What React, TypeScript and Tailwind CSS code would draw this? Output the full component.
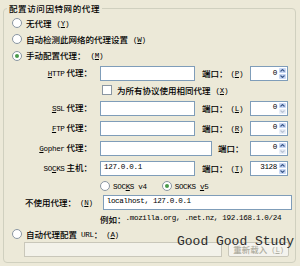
import React from 'react';

const L = ({ children }: { children: React.ReactNode }) => (
  <span className="font-['Liberation_Mono',monospace] font-normal text-[7.6px] tracking-[-0.35px]">{children}</span>
);

const K = ({ c }: { c: string }) => (
  <L>
    (<u>{c}</u>)
  </L>
);

function Radio({ checked }: { checked?: boolean }) {
  return (
    <span className="w-[10px] h-[10px] shrink-0 rounded-full border border-[#8a96a2] bg-white flex items-center justify-center">
      {checked && <span className="w-[4px] h-[4px] rounded-full bg-[#4a9a4a]" />}
    </span>
  );
}

function Arrow({ up, off }: { up?: boolean; off?: boolean }) {
  return (
    <svg width="5" height="3" viewBox="0 0 5 3">
      <path
        d={up ? 'M0.5 2.5 L2.5 0.5 L4.5 2.5' : 'M0.5 0.5 L2.5 2.5 L4.5 0.5'}
        fill="none"
        stroke={off ? '#b9c3d3' : '#3d5a8a'}
        strokeWidth="1.1"
      />
    </svg>
  );
}

function Spin({ value, downOff }: { value: string; downOff?: boolean }) {
  return (
    <div className="w-[38px] h-[15px] shrink-0 border border-[#7f9db9] bg-white flex">
      <span className="flex-1 flex items-center justify-end pr-[2px]">
        <L>{value}</L>
      </span>
      <div className="w-[8px] flex flex-col gap-[1px] py-[1px] pr-[1px]">
        <span className="flex-1 rounded-[1px] bg-[#c9d8f5] flex items-center justify-center">
          <Arrow up />
        </span>
        <span className={`flex-1 rounded-[1px] flex items-center justify-center ${downOff ? 'bg-[#e8eef8]' : 'bg-[#c9d8f5]'}`}>
          <Arrow off={downOff} />
        </span>
      </div>
    </div>
  );
}

function ProxyRow({
  label,
  value = '',
  port,
  portKey,
  wide,
  downOff,
  rowClass,
}: {
  label: React.ReactNode;
  value?: string;
  port: string;
  portKey?: string;
  wide?: boolean;
  downOff?: boolean;
  rowClass: string;
}) {
  return (
    <div className={`flex items-center ${rowClass}`}>
      <div className="w-[88px] text-right whitespace-nowrap">{label}</div>
      <div
        className={`ml-[8px] h-[15px] border border-[#7f9db9] bg-white flex items-center pl-[3px] ${
          wide ? 'w-[112px]' : 'w-[95px]'
        }`}
      >
        <L>{value}</L>
      </div>
      <div className={`flex items-center whitespace-nowrap ${wide ? 'ml-[6px] w-[32px]' : 'ml-[7px] w-[48px]'}`}>
        <span>端口：</span>
        {portKey && (
          <span className="ml-[3px]">
            <K c={portKey} />
          </span>
        )}
      </div>
      <Spin value={port} downOff={downOff} />
    </div>
  );
}

export default function App() {
  return (
    <div className="w-[300px] h-[266px] bg-[#ece9d8] pt-[2px] pl-[3px] relative overflow-hidden font-['Noto_Sans_CJK_SC',sans-serif] font-medium text-[8.5px] leading-none text-black">
      <fieldset className="w-[293px] h-[261px] border border-[#d0d0bf] rounded-[4px]">
        <legend className="ml-[3px] px-[2px] leading-[12px] tracking-[0.6px]">配置访问因特网的代理</legend>

        <div className="flex items-center h-[20px] pl-[8px] -mt-[1px]">
          <Radio />
          <span className="ml-[4px]">无代理</span>
          <span className="ml-[5px]">
            <K c="Y" />
          </span>
        </div>
        <div className="flex items-center h-[12px] pl-[8px]">
          <Radio />
          <span className="ml-[4px]">自动检测此网络的代理设置</span>
          <span className="ml-[5px]">
            <K c="W" />
          </span>
        </div>
        <div className="flex items-center h-[21px] pl-[8px]">
          <Radio checked />
          <span className="ml-[4px]">手动配置代理：</span>
          <span className="ml-[5px]">
            <K c="M" />
          </span>
        </div>

        <ProxyRow
          rowClass="h-[15px]"
          label={
            <>
              <L>
                <u>H</u>TTP
              </L>{' '}
              代理：
            </>
          }
          port="0"
          portKey="P"
        />

        <div className="flex items-center h-[18px] pl-[98px]">
          <span className="w-[10px] h-[10px] border border-[#8a96a2] bg-white shrink-0" />
          <span className="ml-[5px]">为所有协议使用相同代理</span>
          <span className="ml-[5px]">
            <K c="X" />
          </span>
        </div>

        <ProxyRow
          rowClass="h-[18px]"
          label={
            <>
              <L>
                <u>S</u>SL
              </L>{' '}
              代理：
            </>
          }
          port="0"
          portKey="L"
          downOff
        />
        <ProxyRow
          rowClass="h-[22px]"
          label={
            <>
              <L>
                <u>F</u>TP
              </L>{' '}
              代理：
            </>
          }
          port="0"
          portKey="R"
          downOff
        />
        <ProxyRow
          rowClass="h-[18px]"
          label={
            <>
              <L>
                <u>G</u>opher
              </L>{' '}
              代理：
            </>
          }
          port="0"
          wide
          downOff
        />
        <ProxyRow
          rowClass="h-[22px]"
          label={
            <>
              <L>
                SO<u>C</u>KS
              </L>{' '}
              主机：
            </>
          }
          value="127.0.0.1"
          port="3128"
          portKey="T"
        />

        <div className="flex items-center h-[14px] pl-[96px]">
          <Radio />
          <span className="ml-[3px]">
            <L>
              SOC<u>K</u>S v4
            </L>
          </span>
          <span className="ml-[15px]">
            <Radio checked />
          </span>
          <span className="ml-[3px]">
            <L>
              SOCKS <u>v</u>5
            </L>
          </span>
        </div>

        <div className="flex items-center h-[18px] pl-[21px]">
          <span>不使用代理：</span>
          <span className="ml-[4px]">
            <K c="N" />
          </span>
          <div className="ml-[10px] w-[189px] h-[15px] border border-[#7f9db9] bg-white flex items-center pl-[3px]">
            <L>localhost, 127.0.0.1</L>
          </div>
        </div>

        <div className="flex items-center h-[16px] pl-[96px]">
          <span>例如：</span>
          <L>.mozilla.org, .net.nz, 192.168.1.0/24</L>
        </div>

        <div className="flex items-center h-[14px] pl-[8px]">
          <Radio />
          <span className="ml-[4px]">自动代理配置</span>
          <span className="ml-[4px]">
            <L>URL</L>
          </span>
          <span>：</span>
          <span className="ml-[4px]">
            <K c="A" />
          </span>
        </div>

        <div className="flex items-center h-[16px] pl-[20px]">
          <div className="w-[198px] h-[15px] border border-[#c9c7ba] bg-[#f3f2ea]" />
          <button
            disabled
            className="ml-[6px] w-[61px] h-[15px] rounded-[2px] border border-[#c9c7ba] bg-[#f4f3ee] text-[#b0aea0] flex items-center justify-center"
          >
            重新载入
            <span className="ml-[4px]">
              <K c="L" />
            </span>
          </button>
        </div>
      </fieldset>

      <div className="absolute left-[177px] top-[235px] font-['Liberation_Mono',monospace] font-normal text-[13px] leading-[14px] text-[#2b2b2b]">
        Good Good Study
      </div>
    </div>
  );
}
